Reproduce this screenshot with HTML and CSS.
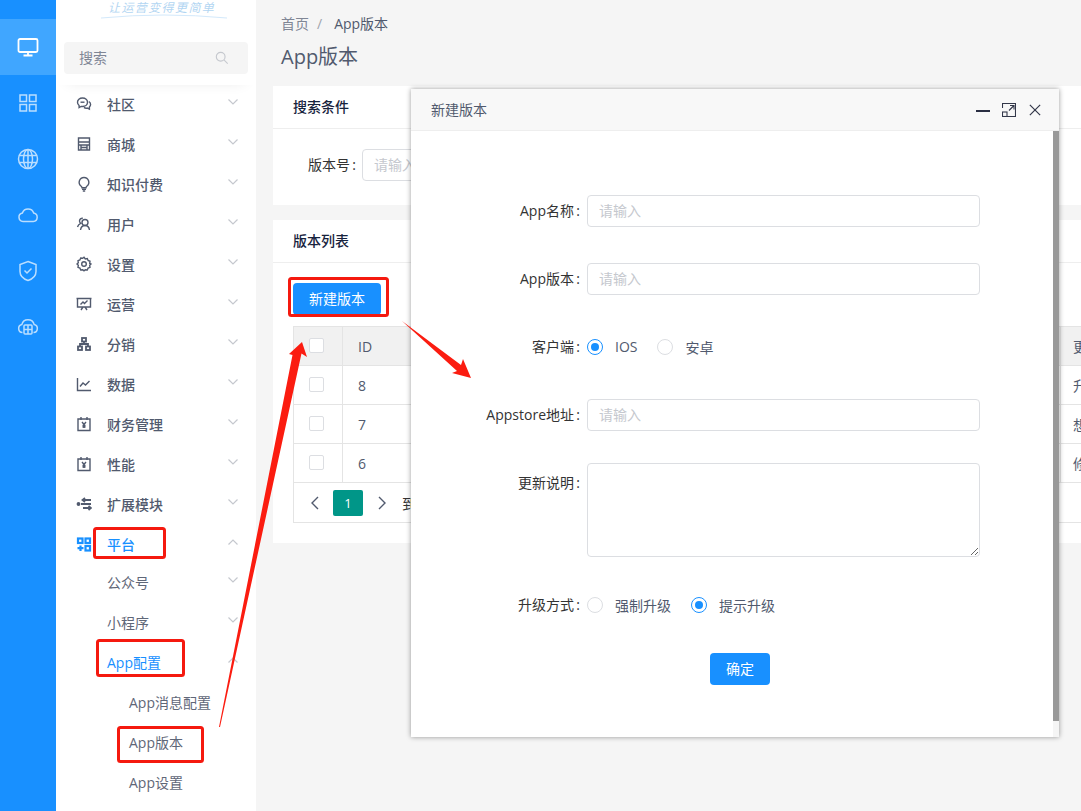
FILE: index.html
```html
<!DOCTYPE html>
<html lang="zh-CN">
<head>
<meta charset="utf-8">
<title>App版本</title>
<link rel="stylesheet" href="styles.css">
</head>
<body>
<div class="page">
  <nav class="rail">
    <div class="rail-item active"><svg viewBox="0 0 24 24" class="rail-icon"><rect x="2.500" y="4" width="19" height="13" rx="1.500"/><path d="M12 17v3M7.500 20.500h9"/></svg></div>
    <div class="rail-item"><svg viewBox="0 0 24 24" class="rail-icon"><rect x="4" y="4" width="6.500" height="6.500"/><rect x="13.500" y="4" width="6.500" height="6.500"/><rect x="4" y="13.500" width="6.500" height="6.500"/><rect x="13.500" y="13.500" width="6.500" height="6.500"/></svg></div>
    <div class="rail-item"><svg viewBox="0 0 24 24" class="rail-icon"><circle cx="12" cy="12" r="9.500"/><ellipse cx="12" cy="12" rx="4.500" ry="9.500"/><path d="M3 8.500h18M3 15.500h18M12 2.500v19"/></svg></div>
    <div class="rail-item"><svg viewBox="0 0 24 24" class="rail-icon"><path d="M7 18.500a4.300 4.300 0 0 1-.6-8.500 6 6 0 0 1 11.300 0 4.300 4.300 0 0 1-.4 8.500z"/></svg></div>
    <div class="rail-item"><svg viewBox="0 0 24 24" class="rail-icon"><path d="M12 2.500l8 3v7c0 4.500-3.500 7.500-8 9-4.500-1.500-8-4.500-8-9v-7z"/><path d="M8.500 11.500l2.500 2.500 4.500-4.500"/></svg></div>
    <div class="rail-item"><svg viewBox="0 0 24 24" class="rail-icon"><path d="M6.500 17.500a4 4 0 0 1-.7-7.900 6.400 6.400 0 0 1 12.400 0 4 4 0 0 1-.7 7.900"/><rect x="8" y="10" width="8" height="9" rx="1"/><path d="M8 14.500h8M12 10v9"/></svg></div>
  </nav>

  <aside class="menu">
    <div class="menu-top">
      <div class="logo"><span class="logo-text">让运营变得更简单</span><svg class="logo-arc" viewBox="0 0 130 6"><path d="M2 5Q65 -1 128 5"/></svg></div>
      <div class="search"><span>搜索</span><svg viewBox="0 0 16 16" class="search-icon"><circle cx="6.500" cy="6.500" r="5"/><path d="M10.500 10.500l4 4"/></svg></div>
    </div>
    <ul class="menu-list">
      <li class="row"><svg viewBox="0 0 16 16" class="micon"><path d="M6.500 2C3.500 2 1.500 3.900 1.500 6.300c0 1.300.6 2.400 1.600 3.200v2l2-1.100c.4.100.9.100 1.400.1 3 0 5-1.900 5-4.200S9.500 2 6.500 2z"/><path d="M12.800 5.500c1.100.7 1.800 1.800 1.800 3 0 1-.5 1.900-1.200 2.600v2l-2-1c-1.200.2-2.600 0-3.500-.7"/><path d="M4.500 6.200h4"/></svg><span>社区</span><svg viewBox="0 0 10 6" class="chev"><path d="M.5.500L5 5 9.500.500"/></svg></li>
      <li class="row"><svg viewBox="0 0 16 16" class="micon"><path d="M2.500 2h11v12h-11zM2.500 6h11M2.500 9h11"/><path d="M5 9v5M11 9v5M5 11.500h6"/></svg><span>商城</span><svg viewBox="0 0 10 6" class="chev"><path d="M.5.500L5 5 9.500.500"/></svg></li>
      <li class="row"><svg viewBox="0 0 16 16" class="micon"><path d="M8 1.500a4.800 4.800 0 0 0-2.800 8.700c.5.400.8.900.8 1.500h4c0-.6.300-1.100.8-1.500A4.800 4.800 0 0 0 8 1.500z"/><path d="M6 13.200h4M6.800 15h2.400"/></svg><span>知识付费</span><svg viewBox="0 0 10 6" class="chev"><path d="M.5.500L5 5 9.500.500"/></svg></li>
      <li class="row"><svg viewBox="0 0 16 16" class="micon"><circle cx="9" cy="6.500" r="3"/><path d="M4.500 14c.4-2.600 2-4.500 4.500-4.500s4.100 1.900 4.500 4.500"/><path d="M6.800 2.200C5 2 3.500 3.300 3.500 5c0 1 .5 1.800 1.200 2.300C3 8 1.900 9.400 1.500 11"/></svg><span>用户</span><svg viewBox="0 0 10 6" class="chev"><path d="M.5.500L5 5 9.500.500"/></svg></li>
      <li class="row"><svg viewBox="0 0 16 16" class="micon"><path d="M8 1.300l1.300 1.600 2-.3.8 1.900 1.900.8-.3 2L15 8l-1.300 1.300.3 2-1.900.8-.8 1.900-2-.3L8 14.800l-1.300-1.100-2 .3-.8-1.900-1.900-.8.3-2L1 8l1.300-1.300-.3-2 1.900-.8.800-1.900 2 .3z"/><circle cx="8" cy="8" r="2.300"/></svg><span>设置</span><svg viewBox="0 0 10 6" class="chev"><path d="M.5.500L5 5 9.500.500"/></svg></li>
      <li class="row"><svg viewBox="0 0 16 16" class="micon"><path d="M1.500 2.500h13v8.500h-13zM5 14l2-3M11 14l-2-3M.5 2.500h15"/><path d="M4.500 8.500l2.500-2.500 1.500 1.500 3-3"/></svg><span>运营</span><svg viewBox="0 0 10 6" class="chev"><path d="M.5.500L5 5 9.500.500"/></svg></li>
      <li class="row"><svg viewBox="0 0 16 16" class="micon heavy"><rect x="6" y="2" width="4" height="3.500"/><rect x="2" y="10.500" width="4" height="3.500"/><rect x="10" y="10.500" width="4" height="3.500"/><path d="M8 5.500V8M4 10.500V8h8v2.500"/></svg><span>分销</span><svg viewBox="0 0 10 6" class="chev"><path d="M.5.500L5 5 9.500.500"/></svg></li>
      <li class="row"><svg viewBox="0 0 16 16" class="micon"><path d="M1.500 2v12.500h13.500"/><path d="M4 10.500l3-3.500 2.500 2 4-4"/></svg><span>数据</span><svg viewBox="0 0 10 6" class="chev"><path d="M.5.500L5 5 9.500.500"/></svg></li>
      <li class="row"><svg viewBox="0 0 16 16" class="micon"><path d="M2 3h12v11.500H2zM5 1v3M11 1v3"/><path d="M6 6l2 2.500L10 6M8 8.500V12M6.500 9.500h3M6.500 11h3"/></svg><span>财务管理</span><svg viewBox="0 0 10 6" class="chev"><path d="M.5.500L5 5 9.500.500"/></svg></li>
      <li class="row"><svg viewBox="0 0 16 16" class="micon"><path d="M2 3h12v11.500H2zM5 1v3M11 1v3"/><path d="M6 6l2 2.500L10 6M8 8.500V12M6.500 9.500h3M6.500 11h3"/></svg><span>性能</span><svg viewBox="0 0 10 6" class="chev"><path d="M.5.500L5 5 9.500.500"/></svg></li>
      <li class="row"><svg viewBox="0 0 16 16" class="micon heavy"><circle cx="2.500" cy="8" r="1"/><path d="M5 8h10M7 4h8M7 12h8M9 2l-2.500 2L9 6M12.500 10l2.500 2-2.500 2"/></svg><span>扩展模块</span><svg viewBox="0 0 10 6" class="chev"><path d="M.5.500L5 5 9.500.500"/></svg></li>
      <li class="row row-on"><svg viewBox="0 0 16 16" class="micon strong"><rect x="2" y="2.500" width="4.500" height="4.500"/><rect x="9.500" y="2.500" width="4.500" height="4.500"/><rect x="9.500" y="10" width="4.500" height="4.500"/><path d="M1.500 12.200h6M4.500 9.500v5.500"/></svg><span>平台</span><svg viewBox="0 0 10 6" class="chev up"><path d="M.5 5.500L5 1l4.500 4.500"/></svg></li>
      <li class="sub-start sub row-sub"><span>公众号</span><svg viewBox="0 0 10 6" class="chev"><path d="M.5.500L5 5 9.500.500"/></svg></li>
      <li class="sub row-sub"><span>小程序</span><svg viewBox="0 0 10 6" class="chev"><path d="M.5.500L5 5 9.500.500"/></svg></li>
      <li class="sub row-sub sub-on"><span>App配置</span><svg viewBox="0 0 10 6" class="chev up"><path d="M.5 5.500L5 1l4.500 4.500"/></svg></li>
      <li class="subsub row-sub"><span>App消息配置</span></li>
      <li class="subsub row-sub"><span>App版本</span></li>
      <li class="subsub row-sub"><span>App设置</span></li>
    </ul>
  </aside>

  <main class="main">
    <div class="crumbs"><span class="crumb">首页</span><span class="crumb-sep">/</span><span class="crumb-last">App版本</span></div>
    <h1 class="title">App版本</h1>

    <section class="card card-search">
      <header class="card-head">搜索条件</header>
      <div class="search-form"><label class="search-label">版本号<span class="colon">:</span></label><input class="field search-field" placeholder="请输入"></div>
    </section>

    <section class="card card-list">
      <header class="card-head">版本列表</header>
      <div class="list-body">
        <button class="btn btn-new">新建版本</button>
        <div class="table">
          <div class="tr th"><div class="td c1"><i class="check"></i></div><div class="td c2">ID</div><div class="td c3">更新说明</div></div>
          <div class="tr"><div class="td c1"><i class="check"></i></div><div class="td c2">8</div><div class="td c3">升级说明</div></div>
          <div class="tr"><div class="td c1"><i class="check"></i></div><div class="td c2">7</div><div class="td c3">想要更新</div></div>
          <div class="tr"><div class="td c1"><i class="check"></i></div><div class="td c2">6</div><div class="td c3">修复问题</div></div>
          <div class="pager">
            <svg viewBox="0 0 10 14" class="pg-arrow"><path d="M8 1L2 7l6 6"/></svg>
            <span class="pg-num">1</span>
            <svg viewBox="0 0 10 14" class="pg-arrow"><path d="M2 1l6 6-6 6"/></svg>
            <span class="pg-to">到第</span>
          </div>
        </div>
      </div>
    </section>
  </main>
</div>

<div class="modal">
  <header class="modal-head">
    <span class="modal-title">新建版本</span>
    <div class="modal-tools">
      <svg viewBox="0 0 14 14" class="tool"><path d="M0 8h14" class="tool-min"/></svg>
      <svg viewBox="0 0 14 14" class="tool"><path d="M.5 5V.5h13v13H5"/><rect x=".5" y="9" width="4.500" height="4.500"/><path d="M7 7.500L12 2.500M8 2.500h4v4"/></svg>
      <svg viewBox="0 0 14 14" class="tool tool-x"><path d="M1 1l12 12M13 1L1 13"/></svg>
    </div>
  </header>
  <div class="modal-body">
    <div class="sb"></div>
    <div class="form-row"><label class="form-label">App名称<span class="colon">:</span></label><input class="field form-field" placeholder="请输入"></div>
    <div class="form-row"><label class="form-label">App版本<span class="colon">:</span></label><input class="field form-field" placeholder="请输入"></div>
    <div class="form-row"><label class="form-label">客户端<span class="colon">:</span></label><div class="radios"><span class="radio on"></span><span class="radio-text">IOS</span><span class="radio"></span><span class="radio-text">安卓</span></div></div>
    <div class="form-row form-row-tight"><label class="form-label">Appstore地址<span class="colon">:</span></label><input class="field form-field" placeholder="请输入"></div>
    <div class="form-row form-row-tight form-row-top"><label class="form-label">更新说明<span class="colon">:</span></label><textarea class="field form-area"></textarea></div>
    <div class="form-row form-row-tight"><label class="form-label">升级方式<span class="colon">:</span></label><div class="radios"><span class="radio"></span><span class="radio-text">强制升级</span><span class="radio on"></span><span class="radio-text">提示升级</span></div></div>
    <div class="form-submit"><button class="btn btn-ok">确定</button></div>
  </div>
</div>

<svg class="marks" viewBox="0 0 1081 811" width="1081" height="811">
  <rect x="94.500" y="528.500" width="70" height="29" rx="2"/>
  <rect x="97.500" y="640.500" width="86" height="35" rx="2"/>
  <rect x="118.500" y="727.500" width="84" height="34" rx="2"/>
  <rect x="289.500" y="278.500" width="98" height="37" rx="2"/>
  <polygon points="302,342 307,357 301.500,353.500 220,727 219,727 292.500,355 289,354"/>
  <polygon points="402,321 461,365 463,359 471,378 452,373 457,371"/>
</svg>
</body>
</html>
```
FILE: styles.css
```css
* { box-sizing: border-box; }
html, body { margin: 0; padding: 0; width: 1081px; height: 811px; overflow: hidden; }
body { font-family: "Open Sans", "Noto Sans CJK SC", sans-serif; font-size: 14px; color: #515a6e; background: #f5f5f5; position: relative; }
ul { list-style: none; margin: 0; padding: 0; }

.page { display: flex; height: 811px; overflow: hidden; }

/* Icon rail */
.rail { flex: 0 0 56px; background: #1890ff; padding-top: 19px; }
.rail-item { height: 56px; display: flex; align-items: center; justify-content: center; }
.rail-item.active { background: #40a6ff; }
.rail-icon { width: 24px; height: 24px; fill: none; stroke: #fff; stroke-width: 1.500; opacity: .7; }
.active .rail-icon { opacity: 1; stroke-width: 1.800; }

/* Menu */
.menu { flex: 0 0 200px; background: #fff; overflow: hidden; }
.menu-top { height: 85px; position: relative; box-shadow: 0 8px 14px -12px rgba(0,0,0,.12); }
.logo { height: 42px; position: relative; }
.logo-text { position: absolute; left: 52px; top: 1px; font-size: 12px; line-height: 14px; letter-spacing: 1.400px; font-style: italic; color: #b3d6f2; white-space: nowrap; }
.logo-arc { position: absolute; left: 43px; top: 13px; width: 130px; height: 6px; fill: none; stroke: #d3e9fb; stroke-width: 1; }
.search { margin-left: 8px; width: 184px; height: 32px; background: #f5f5f5; border-radius: 4px; display: flex; align-items: center; justify-content: space-between; padding: 0 19px 0 15px; color: #808695; }
.search span { margin-top: -2px; }
.search-icon { width: 14px; height: 14px; fill: none; stroke: #c5c8ce; stroke-width: 1.300; }

.row, .row-sub { height: 40px; display: flex; align-items: center; padding-right: 18px; }
.row > span, .row-sub > span { margin-top: -2px; }
.row { padding-left: 20px; font-weight: 500; color: #515a6e; }
.micon { width: 16px; height: 16px; margin-right: 15px; margin-top: -2px; fill: none; stroke: #515a6e; stroke-width: 1.400; flex: none; }
.micon.heavy { stroke-width: 1.800; }
.micon.strong { stroke: #1890ff; stroke-width: 2.200; }
.chev { width: 10px; height: 6px; margin-left: auto; margin-bottom: 6px; fill: none; stroke: #c5c8ce; stroke-width: 1.200; flex: none; }
.row-on { color: #1890ff; }
.sub-start { margin-top: -2px; }
.sub { padding-left: 51px; color: #5f6778; }
.sub-on { color: #1890ff; }
.subsub { padding-left: 73px; color: #5f6778; }

/* Main */
.main { flex: 1; min-width: 0; padding: 14px 0 0 17px; background: #f5f5f5; }
.crumbs { display: flex; height: 20px; line-height: 20px; padding-left: 8px; }
.crumb { color: #808695; }
.crumb-sep { color: #a0a4ad; margin: 0 12px 0 8px; }
.crumb-last { color: #515a6e; }
.title { margin: 8px 0 14px; padding-left: 8px; font-size: 20px; line-height: 30px; font-weight: 400; color: #515a6e; }

.card { background: #fff; overflow: hidden; }
.card-search { height: 119px; margin-bottom: 15px; }
.card-list { height: 323px; }
.card-head { height: 43px; line-height: 42px; padding-left: 20px; border-bottom: 1px solid #eeeeee; font-weight: 500; color: #17233d; }
.search-form { display: flex; align-items: center; padding: 20px 0 0 35px; }
.search-label { margin-right: 6px; color: #333; margin-top: -2px; }
.colon { display: inline-block; width: 6px; text-align: right; }
.field { border: 1px solid #dcdee2; border-radius: 4px; background: #fff; font: inherit; padding: 0 12px 2px 11px; outline: none; }
.field::placeholder { color: #c5c8ce; opacity: 1; }
.search-field { width: 200px; height: 32px; }

.list-body { padding: 20px 0 0 20px; }
.btn { border: 0; border-radius: 4px; background: #1890ff; color: #fff; font: inherit; padding: 0 0 2px; display: block; }
.btn-new { width: 88px; height: 32px; margin-bottom: 11px; }

.table { width: 900px; border: 1px solid #e4e4e4; }
.tr { display: flex; height: 39px; border-bottom: 1px solid #e4e4e4; }
.tr.th { background: #f1f1f1; }
.td { display: flex; align-items: center; color: #515a6e; white-space: nowrap; overflow: hidden; }
.c1 { flex: 0 0 49px; justify-content: center; border-right: 1px solid #e4e4e4; padding-right: 3px; padding-bottom: 2px; }
.c2 { flex: 0 0 718px; padding-left: 15px; border-right: 1px solid #e4e4e4; }
.c3 { flex: 1; padding-left: 12px; }
.check { width: 15px; height: 15px; background: #fff; border: 1px solid #dcdee2; border-radius: 2px; display: block; }
.pager { height: 39px; display: flex; align-items: center; padding-left: 16px; }
.pg-arrow { width: 10px; height: 14px; fill: none; stroke: #515a6e; stroke-width: 1.400; }
.pg-num { width: 30px; height: 26px; line-height: 26px; margin: 0 14px 0 13px; background: #009688; color: #fff; border-radius: 2px; text-align: center; font-size: 13px; }
.pg-to { margin-left: 15px; color: #333; }

/* Modal */
.modal { position: absolute; left: 411px; top: 89px; width: 648px; height: 648px; background: #fff; box-shadow: 0 0 5px rgba(0,0,0,.4); display: flex; flex-direction: column; }
.modal-head { flex: 0 0 42px; background: #f8f8f8; border-bottom: 1px solid #eee; display: flex; align-items: center; padding: 0 18px 0 20px; }
.modal-title { color: #515a6e; margin-top: -2px; }
.modal-tools { margin-left: auto; display: flex; align-items: center; gap: 12px; }
.tool { width: 14px; height: 14px; fill: none; stroke: #33384a; stroke-width: 1.100; }
.tool-min { stroke-width: 2; stroke: #2a2e42; }
.tool-x { width: 12px; height: 12px; margin-left: 1px; stroke-width: 1.400; }
.modal-body { flex: 1; position: relative; padding-top: 64px; background: #fff; }
.modal-body::after { content: ""; position: absolute; right: 0; bottom: 0; width: 6px; height: 16px; background: #f5f5f5; }
.sb { position: absolute; right: 0; top: 0; width: 6px; height: 590px; background: #999; }
.form-row { display: flex; margin-bottom: 36px; min-height: 32px; align-items: center; }
.form-row-tight { margin-bottom: 32px; }
.form-row-top { align-items: flex-start; }
.form-label { flex: 0 0 169px; margin-right: 7px; text-align: right; color: #333; margin-top: -2px; }
.form-row-top .form-label { padding-top: 11px; }
.form-field { width: 393px; height: 32px; }
.form-area { width: 393px; height: 94px; padding: 5px 12px; display: block; resize: vertical; }
.radios { display: flex; align-items: center; margin-top: -1px; }
.radio { width: 16px; height: 16px; border: 1px solid #dcdee2; border-radius: 50%; background: #fff; position: relative; flex: none; }
.radio.on { border-color: #1890ff; }
.radio.on::after { content: ""; position: absolute; left: 3px; top: 3px; width: 8px; height: 8px; border-radius: 50%; background: #1890ff; }
.radio-text { margin: 0 20px 0 12px; color: #515a6e; }
.form-submit { padding-left: 299px; }
.btn-ok { width: 60px; height: 32px; }

/* Annotations drawn over the screenshot */
.marks { position: absolute; left: 0; top: 0; pointer-events: none; }
.marks rect { fill: none; stroke: #f5190f; stroke-width: 3; }
.marks polygon { fill: #fb1c10; stroke: none; }
```
